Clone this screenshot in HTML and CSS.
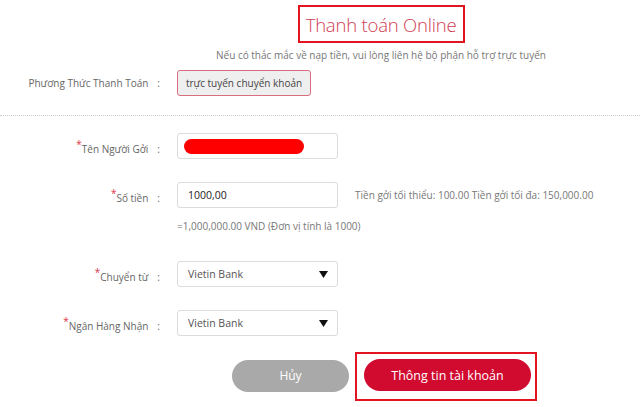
FILE: index.html
```html
<!DOCTYPE html>
<html lang="vi">
<head>
<meta charset="utf-8">
<title>Thanh toán Online</title>
<link rel="stylesheet" href="styles.css">
</head>
<body>
<div class="page">
  <header class="head">
    <h1 class="title">Thanh toán Online</h1>
    <p class="note">Nếu có thắc mắc về nạp tiền, vui lòng liên hệ bộ phận hỗ trợ trực tuyến</p>
  </header>

  <div class="row row-method">
    <div class="label">Phương Thức Thanh Toán<span class="colon">:</span></div>
    <div class="method">trực tuyến chuyển khoản</div>
  </div>

  <div class="divider"></div>

  <div class="form">
    <div class="row">
      <div class="label"><span class="req">*</span>Tên Người Gởi<span class="colon">:</span></div>
      <div class="field"><span class="redact"></span></div>
    </div>

    <div class="row">
      <div class="label"><span class="req">*</span>Số tiền<span class="colon">:</span></div>
      <div class="field"><span class="value">1000,00</span></div>
      <div class="hint">Tiền gởi tối thiểu: 100.00 Tiền gởi tối đa: 150,000.00</div>
    </div>
    <div class="row row-sub">
      <div class="label"></div>
      <div class="sub">=1,000,000.00 VND (Đơn vị tính là 1000)</div>
    </div>

    <div class="row row-select">
      <div class="label"><span class="req">*</span>Chuyển từ<span class="colon">:</span></div>
      <div class="field select"><span class="value light">Vietin Bank</span><svg class="arrow" width="9" height="7" viewBox="0 0 9 7"><path d="M0 0H9L4.5 7Z" fill="#111"/></svg></div>
    </div>

    <div class="row">
      <div class="label"><span class="req">*</span>Ngân Hàng Nhận<span class="colon">:</span></div>
      <div class="field select"><span class="value light">Vietin Bank</span><svg class="arrow" width="9" height="7" viewBox="0 0 9 7"><path d="M0 0H9L4.5 7Z" fill="#111"/></svg></div>
    </div>
  </div>

  <div class="actions">
    <button class="btn btn-cancel" type="button">Hủy</button>
    <div class="highlight">
      <button class="btn btn-primary" type="button">Thông tin tài khoản</button>
    </div>
  </div>
</div>
</body>
</html>
```

FILE: styles.css
```css
* { box-sizing: border-box; }
html, body { margin: 0; padding: 0; background: #fff; }
body {
  font-family: "Open Sans", "Noto Sans", sans-serif;
  color: #666;
  width: 640px;
  height: 407px;
  overflow: hidden;
}
.page { padding-top: 5px; }

.head {
  display: flex;
  flex-direction: column;
  align-items: center;
  padding-left: 122px;
}
.title {
  margin: 0;
  width: 167px;
  height: 38px;
  border: 2px solid #e3131f;
  display: flex;
  align-items: center;
  justify-content: center;
  font-weight: 300;
  font-size: 18.5px;
  color: #cf3c52;
  letter-spacing: -0.2px;
}
.note {
  margin: 5px 0 0;
  font-size: 10px;
  color: #777;
  line-height: 14px;
}

.row {
  display: flex;
  align-items: center;
  gap: 17px;
}
.label {
  width: 160px;
  flex: none;
  text-align: right;
  font-size: 10px;
  color: #666;
}
.colon { margin-left: 9px; }
.req {
  color: #e0334a;
  font-size: 10px;
  vertical-align: 5px;
}
.row-method { margin-top: 8px; }
.method {
  width: 134px;
  height: 26px;
  border: 1px solid #d86e80;
  border-radius: 3px;
  background: #efefef;
  display: flex;
  align-items: center;
  justify-content: center;
  font-size: 10px;
  color: #444;
}

.divider {
  margin-top: 19px;
  border-top: 1px dotted #ccc;
}

.form {
  display: flex;
  flex-direction: column;
  gap: 23px;
  padding-top: 17px;
}
.field {
  width: 161px;
  height: 26px;
  border: 1px solid #dcdcdc;
  border-radius: 3px;
  background: #fff;
  display: flex;
  align-items: center;
  padding: 0 6px 0 10px;
}
.redact {
  display: block;
  width: 120px;
  height: 15px;
  border-radius: 8px;
  background: #ff0000;
  margin-left: -4px;
}
.value {
  font-size: 10.5px;
  color: #222;
}
.value.light { color: #555; }
.select { justify-content: space-between; padding-right: 9px; }
.arrow { display: block; }
.hint {
  font-size: 10px;
  color: #777;
}
.row-sub { margin-top: -12px; }
.sub {
  font-size: 10px;
  color: #777;
  line-height: 14px;
}
.row-select { margin-top: 5px; }

.actions {
  display: flex;
  align-items: center;
  gap: 6px;
  padding-left: 232px;
  margin-top: 16px;
}
.btn {
  border: none;
  height: 32px;
  border-radius: 16px;
  color: #fff;
  font-family: "Open Sans", "Noto Sans", sans-serif;
  font-size: 12px;
  padding: 0;
  cursor: pointer;
}
.btn-cancel {
  width: 117px;
  background: #a9a9a9;
  margin-top: -2px;
}
.highlight {
  border: 2px solid #e3131f;
  padding: 5px 4px 8px 7px;
}
.btn-primary {
  width: 167px;
  background: #d10a30;
  display: block;
  font-size: 12.5px;
}
```
